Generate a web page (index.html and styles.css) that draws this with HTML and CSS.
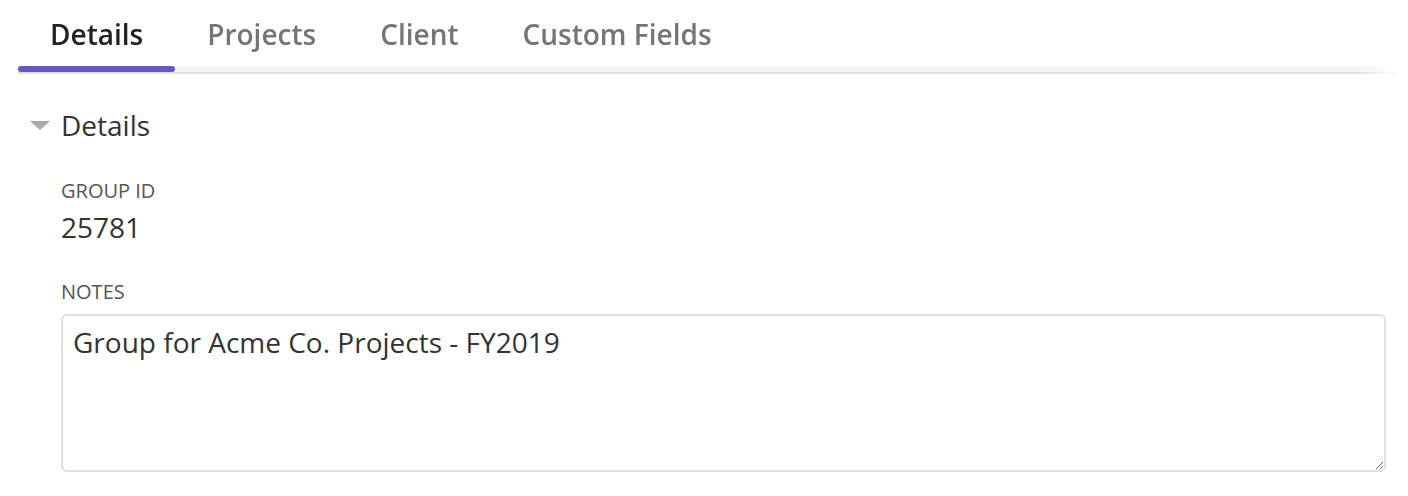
FILE: index.html
```html
<!DOCTYPE html>
<html>
<head>
<meta charset="utf-8">
<link rel="stylesheet" href="styles.css">
</head>
<body>
<div class="page">
  <nav class="tabs">
    <div class="tab active">Details</div>
    <div class="tab">Projects</div>
    <div class="tab">Client</div>
    <div class="tab">Custom Fields</div>
  </nav>
  <section class="section">
    <div class="section-head">
      <span class="caret"></span>
      <span class="section-title">Details</span>
    </div>
    <div class="field field-id">
      <div class="label">GROUP ID</div>
      <div class="value">25781</div>
    </div>
    <div class="field field-notes">
      <div class="label">NOTES</div>
      <textarea class="notes">Group for Acme Co. Projects - FY2019</textarea>
    </div>
  </section>
</div>
</body>
</html>
```
FILE: styles.css
```css
* { box-sizing: border-box; }
html, body { margin: 0; padding: 0; background: #fff; }
body { font-family: "Open Sans", "Noto Sans", sans-serif; color: #333; }
.page { padding: 0 10px 0 18px; }
.tabs {
  display: flex;
  height: 74px;
  border-bottom: 2px solid #deded8;
  background: linear-gradient(to bottom, #fff 0, #fff 66px, #f4f4f4 66px);
  -webkit-mask-image: linear-gradient(to right, #000 97%, transparent 100%);
  mask-image: linear-gradient(to right, #000 97%, transparent 100%);
}
.tab {
  font-size: 28px;
  line-height: 38px;
  font-weight: 600;
  color: #757575;
  padding: 15px 32px 0;
  height: 72px;
  position: relative;
}
.tab.active { color: #222; }
.tab.active::after {
  content: "";
  position: absolute;
  left: 0; right: 0; bottom: 0;
  height: 6px;
  border-radius: 3px;
  background: #6a55c1;
}
.section { padding: 32px 0 0 12px; }
.section-head { display: flex; align-items: center; gap: 11px; height: 38px; }
.caret {
  width: 0; height: 0;
  border-left: 10px solid transparent;
  border-right: 10px solid transparent;
  border-top: 9px solid #a9a9a9;
}
.section-title { font-size: 28px; line-height: 38px; color: #333; }
.field { padding-left: 31px; }
.field-id { margin-top: 33px; }
.field-notes { margin-top: 32px; }
.label { font-size: 20px; color: #555; line-height: 27px; }
.value { font-size: 28px; color: #333; line-height: 38px; margin-top: 4px; }
.notes {
  display: block;
  margin-top: 9px;
  width: 1325px;
  height: 158px;
  border: 2px solid #dededa;
  border-radius: 6px;
  font-family: "Open Sans", "Noto Sans", sans-serif;
  font-size: 28px;
  color: #333;
  padding: 7px 10px;
  line-height: 38px;
  resize: vertical;
  outline: none;
}
```
